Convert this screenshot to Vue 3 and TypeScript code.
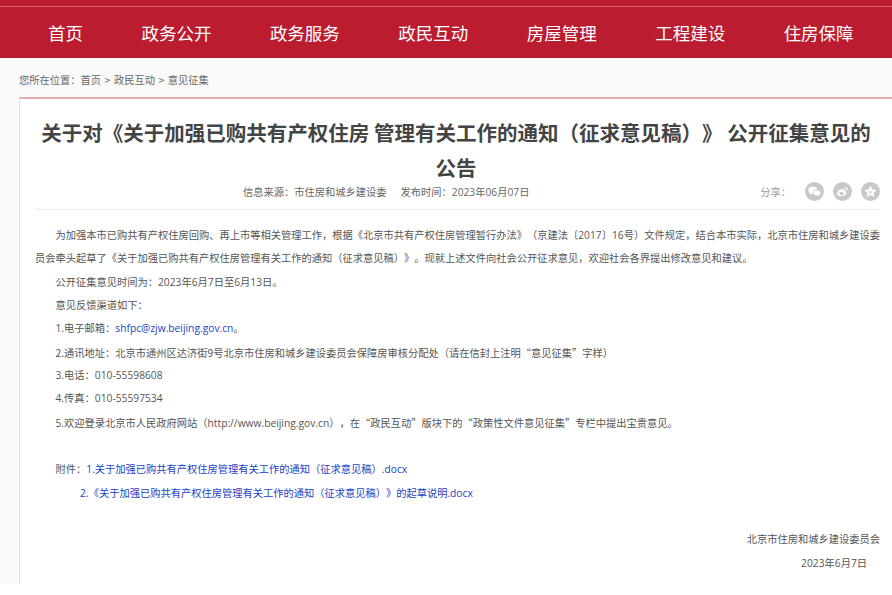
<template>
  <div class="app">
    <!-- 顶部导航 -->
    <header class="nav">
      <a v-for="item in navItems" :key="item" class="nav-item">{{ item }}</a>
    </header>

    <main class="page">
      <div class="crumb">您所在位置：首页 &gt; 政民互动 &gt; 意见征集</div>

      <section class="card">
        <h1 class="title">关于对《关于加强已购共有产权住房 管理有关工作的通知（征求意见稿）》 公开征集意见的公告</h1>

        <div class="meta">
          <div class="meta-info">
            <span>信息来源：市住房和城乡建设委</span>
            <span>发布时间：2023年06月07日</span>
          </div>
          <div class="share">
            <span class="share-label">分享：</span>
            <svg class="share-icon" viewBox="0 0 20 20">
              <circle cx="10" cy="10" r="10" fill="#c8c8c8" />
              <ellipse cx="8.2" cy="8.6" rx="4.6" ry="3.8" fill="#fff" />
              <path d="M5.4 11l-.6 2 2.2-1.2z" fill="#fff" />
              <ellipse cx="12.6" cy="11.6" rx="3.9" ry="3.2" fill="#fff" stroke="#c8c8c8" stroke-width=".8" />
              <path d="M14.6 14l1 1.3-.2-1.9z" fill="#fff" />
            </svg>
            <svg class="share-icon" viewBox="0 0 20 20">
              <circle cx="10" cy="10" r="10" fill="#c8c8c8" />
              <path d="M9 7.4c-2.6.5-4.9 2.6-4.9 4.6 0 1.8 2.1 3 4.6 3 3 0 5.4-1.6 5.4-3.4 0-1.2-1.1-1.6-1.6-1.8.3-.8.2-1.5-.4-1.8-.7-.3-1.7 0-2.5.4.2-.8 0-1.2-.6-1z" fill="#fff" />
              <ellipse cx="8.9" cy="12" rx="2.2" ry="1.7" fill="#c8c8c8" />
              <path d="M12.6 5.4c1.6-.2 3 1 2.9 2.9M12.9 7.1c.8-.1 1.2.4 1.1 1.1" fill="none" stroke="#fff" stroke-width=".9" stroke-linecap="round" />
            </svg>
            <svg class="share-icon" viewBox="0 0 20 20">
              <circle cx="10" cy="10" r="10" fill="#c8c8c8" />
              <path d="M10 3.6l1.9 4.2 4.6.5-3.4 3.1.9 4.5-4-2.3-4 2.3.9-4.5-3.4-3.1 4.6-.5z" fill="#fff" />
              <path d="M7.6 10.4h3.8l-2.6 2.2" fill="none" stroke="#c8c8c8" stroke-width=".9" />
            </svg>
          </div>
        </div>

        <div class="content">
          <p>为加强本市已购共有产权住房回购、再上市等相关管理工作，根据《北京市共有产权住房管理暂行办法》（京建法〔2017〕16号）文件规定，结合本市实际，北京市住房和城乡建设委员会牵头起草了《关于加强已购共有产权住房管理有关工作的通知（征求意见稿）》。现就上述文件向社会公开征求意见，欢迎社会各界提出修改意见和建议。</p>
          <p>公开征集意见时间为：2023年6月7日至6月13日。</p>
          <p>意见反馈渠道如下：</p>
          <p>1.电子邮箱：<a class="link">shfpc@zjw.beijing.gov.cn</a>。</p>
          <p class="cjk">2.通讯地址：北京市通州区达济街9号北京市住房和城乡建设委员会保障房审核分配处（请在信封上注明“意见征集”字样）</p>
          <p>3.电话：010-55598608</p>
          <p>4.传真：010-55597534</p>
          <p>5.欢迎登录北京市人民政府网站（http://www.beijing.gov.cn），在<span class="cjk">“</span>政民互动<span class="cjk">”</span>版块下的<span class="cjk">“</span>政策性文件意见征集<span class="cjk">”</span>专栏中提出宝贵意见。</p>
          <p class="blank"></p>
          <p>附件：<a class="link">1.关于加强已购共有产权住房管理有关工作的通知（征求意见稿）.docx</a></p>
          <p class="attach-2"><a class="link">2.《关于加强已购共有产权住房管理有关工作的通知（征求意见稿）》的起草说明.docx</a></p>
          <p class="blank"></p>
          <p class="sign">北京市住房和城乡建设委员会</p>
          <p class="sign date">2023年6月7日</p>
        </div>
      </section>
    </main>
  </div>
</template>

<script setup lang="ts">
const navItems: string[] = ['首页', '政务公开', '政务服务', '政民互动', '房屋管理', '工程建设', '住房保障']
</script>

<style>
html,
body {
  margin: 0;
  background: #fff;
  overflow: hidden;
}
</style>

<style scoped>
.app {
  width: 892px;
  font-family: "Noto Sans CJK SC", "Liberation Sans", sans-serif;
  color: #555;
  text-spacing-trim: space-all;
}

.nav {
  box-sizing: border-box;
  height: 58px;
  padding: 8px 0 0 48px;
  display: flex;
  gap: 58.45px;
  align-items: center;
  background: #bb1c2f;
  background-image: linear-gradient(#bb1c2f 6px, #d0606c 6px, #d0606c 7px, #bb1c2f 7px);
}

.nav-item {
  font-size: 17.5px;
  line-height: 24px;
  color: #fff;
  white-space: nowrap;
}

.page {
  box-sizing: border-box;
  height: 526px;
  padding-left: 19px;
  background: #fafafa;
  overflow: hidden;
}

.crumb {
  height: 39px;
  font-size: 10.25px;
  line-height: 44px;
  word-spacing: 1.3px;
  color: #666;
}

.card {
  box-sizing: border-box;
  height: 487px;
  padding: 16px 12px 0 15px;
  background: #fff;
  border-top: 2px solid #e8a9b0;
  border-left: 1px solid #e2e2e2;
}

.title {
  margin: 0;
  padding: 0 7px 0 4px;
  font-size: 20.5px;
  line-height: 35px;
  font-weight: 700;
  color: #444;
  text-align: center;
}

.meta {
  position: relative;
  height: 23px;
  margin-top: 1px;
  border-bottom: 1px dotted #ddd;
}

.meta-info {
  display: flex;
  gap: 14px;
  padding-left: 208px;
  font-family: "Open Sans", "Noto Sans CJK SC", sans-serif;
  font-size: 10.25px;
  line-height: 12px;
  color: #666;
}

.share {
  position: absolute;
  right: 0;
  top: -4px;
  display: flex;
  align-items: center;
  gap: 9px;
}

.share-label {
  margin-right: 5px;
  font-size: 10.25px;
  line-height: 12px;
  color: #999;
}

.share-icon {
  width: 19px;
  height: 19px;
}

.content {
  padding-top: 14px;
}

.content p {
  margin: 0;
  font-family: "Open Sans", "Noto Sans CJK SC", sans-serif;
  font-size: 10.25px;
  line-height: 23.33px;
  text-indent: 2em;
  color: #555;
}

.content .cjk {
  font-family: "Noto Sans CJK SC", sans-serif;
}

.content p.blank {
  height: 23.33px;
}

.content p.attach-2 {
  text-indent: 4.4em;
}

.content p.sign {
  text-indent: 0;
  text-align: right;
}

.content p.date {
  padding-right: 13px;
}

.link {
  color: #1c3fc4;
}
</style>
